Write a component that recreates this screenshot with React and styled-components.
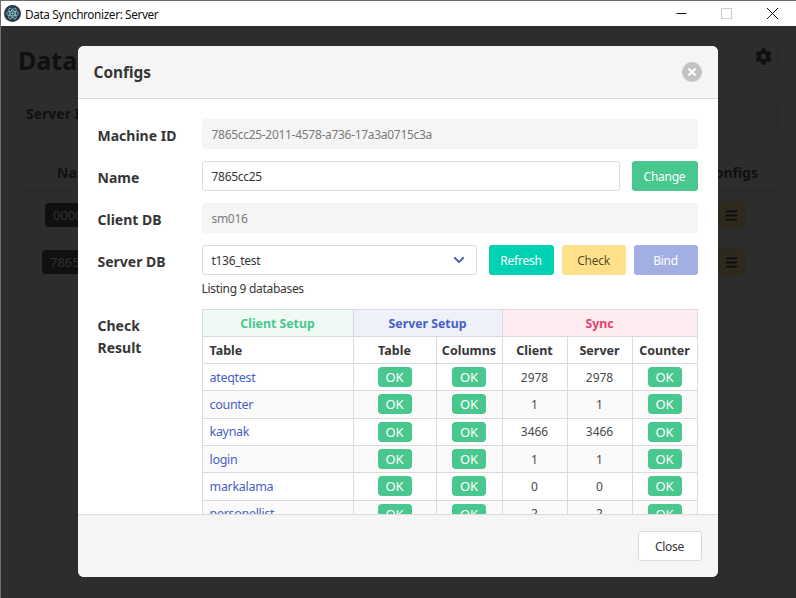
import React from "react";
import styled, { createGlobalStyle } from "styled-components";
import { FaCog, FaBars, FaChevronDown } from "react-icons/fa";

const Global = createGlobalStyle`
  html, body { margin: 0; padding: 0; height: 100%; overflow: hidden; }
  * { box-sizing: border-box; }
  body { font-family: "Noto Sans", "Open Sans", sans-serif; font-size: 13px; color: #4a4a4a; background: #fff; }
`;

const Win = styled.div`
  width: 796px; height: 598px; display: flex; flex-direction: column;
  border-top: 1px solid #6e6e6e; border-left: 1px solid #6e6e6e;
`;
const TitleBar = styled.header`
  height: 25px; flex: none; display: flex; align-items: center; background: #fff; padding: 0 1px 0 3px;
`;
const AppIcon = styled.svg`width: 17px; height: 17px; flex: none; margin-right: 4px;`;
const AppTitle = styled.span`font-size: 11.8px; color: #111; flex: 1; letter-spacing: -0.38px;`;
const WinCtl = styled.div`
  width: 45.5px; height: 25px; display: flex; align-items: center; justify-content: center;
`;
const Page = styled.main`flex: 1; position: relative; overflow: hidden; background: #fff; padding: 16px 17px;`;
const TopRow = styled.div`display: flex; justify-content: space-between; align-items: flex-start; height: 38px;`;
const Heading = styled.h1`margin: 0; font-size: 25px; line-height: 36px; font-weight: 700; color: #363636; white-space: nowrap;`;
const GearBtn = styled.button`
  width: 29px; height: 29px; border: 1px solid #dbdbdb; background: #fff; border-radius: 3px; padding: 0;
  display: flex; align-items: center; justify-content: center; color: #363636; font-size: 17px; margin-right: 1px;
`;
const Tabs = styled.div`
  margin-top: 17px; height: 33px; width: 760px; border: 1px solid #dbdbdb; border-radius: 3px; padding: 0 7px;
  display: flex; align-items: center; font-weight: 700; font-size: 14px; color: #363636;
`;
const BgTable = styled.div`margin-top: 24px; width: 760px;`;
const BgHead = styled.div`
  display: flex; justify-content: space-between; height: 38px; align-items: center; padding: 0 20px 0 39px;
  border-bottom: 1px solid #dbdbdb; font-weight: 700; color: #363636; font-size: 14px;
`;
const BgRow = styled.div`
  display: flex; justify-content: space-between; height: 47px; align-items: center; padding: 0 33px 0 15px;
  border-bottom: 1px solid #ededed;
`;
const NameCol = styled.div`width: 100px; display: flex; justify-content: center;`;
const Pill = styled.span`
  background: #363636; color: #fff; border-radius: 4px; width: ${p => p.$w}px; padding-left: 8px; height: 24px; display: flex; align-items: center; flex: none;
`;
const BarsBtn = styled.button`
  width: 28px; height: 28px; border: 0; border-radius: 3px; background: #ffe08a; color: #222; padding: 0;
  display: flex; align-items: center; justify-content: center; font-size: 13px;
`;

const Overlay = styled.div`
  position: absolute; inset: 0; background: rgba(10, 10, 10, 0.86);
  display: flex; justify-content: center; align-items: flex-start; padding: 20px 0 0 0;
`;
const Modal = styled.section`
  width: 640px; height: 531px; margin-right: 2px; border-radius: 6px; overflow: hidden; display: flex; flex-direction: column; background: #fff;
`;
const ModalHead = styled.div`
  height: 53px; flex: none; background: #f5f5f5; border-bottom: 1px solid #dbdbdb; padding: 0 16px;
  display: flex; align-items: center; justify-content: space-between;
`;
const ModalTitle = styled.h2`margin: 0; font-size: 15.4px; font-weight: 700; color: #363636;`;
const Delete = styled.button`
  width: 20px; height: 20px; border-radius: 50%; border: 0; padding: 0; background: #c2c2c2; position: relative;
  &::before, &::after {
    content: ""; position: absolute; left: 5px; top: 9px; width: 10px; height: 2px; background: #fff;
  }
  &::before { transform: rotate(45deg); }
  &::after { transform: rotate(-45deg); }
`;
const ModalBody = styled.div`flex: 1; overflow: hidden; padding: 20px 20px 0;`;
const Row = styled.div`display: flex; align-items: flex-start; margin-bottom: 12px;`;
const Label = styled.label`
  width: 104px; flex: none; font-size: 14px; font-weight: 700; color: #363636; line-height: 22px; padding-top: 6px;
`;
const Controls = styled.div`flex: 1; display: flex; gap: 8px; min-width: 0;`;
const Field = styled.div`
  flex: 1; height: 30px; border-radius: 3px; padding: 0 9px; display: flex; align-items: center; font-size: 12px; min-width: 0;
  letter-spacing: -0.3px;
  margin-right: ${p => p.$gap || 0}px;
  background: ${p => (p.$disabled ? "#f5f5f5" : "#fff")};
  color: ${p => (p.$disabled ? "#7a7a7a" : "#363636")};
  border: 1px solid ${p => (p.$disabled ? "#f5f5f5" : "#dbdbdb")};
  justify-content: space-between;
`;
const SelectArrow = styled(FaChevronDown)`color: #485fc7; font-size: 12px; margin-right: 2px;`;
const Btn = styled.button`
  height: 30px; width: ${p => p.$w}px; flex: none; border: 0; border-radius: 3px; font: inherit; font-size: 12px; padding: 0;
  letter-spacing: -0.25px;
  background: ${p => p.$bg}; color: ${p => p.$fg || "#fff"};
`;
const Help = styled.p`margin: -8px 0 0 104px; height: 20px; line-height: 20px; font-size: 12px; letter-spacing: -0.3px; color: #363636;`;
const CheckRow = styled.div`display: flex; align-items: flex-start; margin-top: 10px;`;
const CheckLabel = styled(Label)`padding-top: 6px;`;
const Table = styled.table`
  width: 496px; flex: none; border-collapse: collapse; table-layout: fixed; font-size: 12px; color: #4a4a4a;
  td, th { border: 1px solid #dbdbdb; padding: 0; text-align: center; vertical-align: middle; }
`;
const Col = styled.col`width: ${p => p.$w}px;`;
const GroupCell = styled.th`
  height: 27px; font-size: 12.3px; font-weight: 700; background: ${p => p.$bg}; color: ${p => p.$fg};
`;
const ColHead = styled.th`
  height: 27px; font-size: 12.5px; font-weight: 700; color: #363636; text-align: ${p => p.$left ? "left" : "center"} !important;
  padding-left: ${p => p.$left ? "7px" : "0"} !important;
`;
const DataRow = styled.tr`height: 27.33px; background: ${p => (p.$odd ? "#fafafa" : "#fff")};`;
const NameCell = styled.td`text-align: left !important; padding-left: 7px !important; color: #485fc7; font-size: 12.5px; letter-spacing: -0.3px;`;
const Ok = styled.span`
  display: inline-flex; align-items: center; justify-content: center; width: 34px; height: 20px; border-radius: 4px;
  background: #48c78e; color: #fff; font-size: 13px; vertical-align: middle;
`;
const ModalFoot = styled.div`
  height: 63px; flex: none; background: #f5f5f5; border-top: 1px solid #dbdbdb; padding: 0 16px;
  display: flex; align-items: center; justify-content: flex-end;
`;
const CloseBtn = styled.button`
  width: 64px; height: 30px; background: #fff; border: 1px solid #dbdbdb; border-radius: 3px; font: inherit; font-size: 12px; letter-spacing: -0.25px; color: #363636; padding: 0;
`;

const rows = [
  ["ateqtest", 2978, 2978], ["counter", 1, 1], ["kaynak", 3466, 3466], ["login", 1, 1],
  ["markalama", 0, 0], ["personellist", 2, 2], ["sayim", 12, 12], ["stok", 40, 40], ["urun", 7, 7],
];

export default function App() {
  return (
    <Win>
      <Global />
      <TitleBar>
        <AppIcon viewBox="0 0 17 17">
          <circle cx="8.5" cy="8.5" r="8.5" fill="#2b3a47" />
          <g fill="none" stroke="#9fdcee" strokeWidth="0.7">
            <ellipse cx="8.5" cy="8.5" rx="6" ry="2.4" />
            <ellipse cx="8.5" cy="8.5" rx="6" ry="2.4" transform="rotate(60 8.5 8.5)" />
            <ellipse cx="8.5" cy="8.5" rx="6" ry="2.4" transform="rotate(120 8.5 8.5)" />
          </g>
          <circle cx="8.5" cy="8.5" r="1.1" fill="#9fdcee" />
        </AppIcon>
        <AppTitle>Data Synchronizer: Server</AppTitle>
        <WinCtl><svg width="11" height="11"><path d="M0.5 5.5h10" stroke="#111" /></svg></WinCtl>
        <WinCtl><svg width="11" height="11"><rect x="0.5" y="0.5" width="10" height="10" fill="none" stroke="#ccc" /></svg></WinCtl>
        <WinCtl><svg width="11" height="11"><path d="M0 0l11 11M11 0L0 11" stroke="#111" /></svg></WinCtl>
      </TitleBar>
      <Page>
        <TopRow>
          <Heading>Data Synchronizer</Heading>
          <GearBtn><FaCog /></GearBtn>
        </TopRow>
        <Tabs>Server Info</Tabs>
        <BgTable>
          <BgHead><span>Name</span><span>Configs</span></BgHead>
          <BgRow><NameCol><Pill $w={76}>00000000</Pill></NameCol><BarsBtn><FaBars /></BarsBtn></BgRow>
          <BgRow><NameCol><Pill $w={82}>7865cc25</Pill></NameCol><BarsBtn><FaBars /></BarsBtn></BgRow>
        </BgTable>
        <Overlay>
          <Modal>
            <ModalHead>
              <ModalTitle>Configs</ModalTitle>
              <Delete aria-label="close" />
            </ModalHead>
            <ModalBody>
              <Row>
                <Label>Machine ID</Label>
                <Controls><Field $disabled>7865cc25-2011-4578-a736-17a3a0715c3a</Field></Controls>
              </Row>
              <Row>
                <Label>Name</Label>
                <Controls>
                  <Field $gap={4}>7865cc25</Field>
                  <Btn $w={66} $bg="#48c78e">Change</Btn>
                </Controls>
              </Row>
              <Row>
                <Label>Client DB</Label>
                <Controls><Field $disabled>sm016</Field></Controls>
              </Row>
              <Row>
                <Label>Server DB</Label>
                <Controls>
                  <Field $gap={4}>t136_test<SelectArrow /></Field>
                  <Btn $w={65} $bg="#00d1b2">Refresh</Btn>
                  <Btn $w={64} $bg="#ffe08a" $fg="rgba(0,0,0,.7)">Check</Btn>
                  <Btn $w={64} $bg="#a3aee3">Bind</Btn>
                </Controls>
              </Row>
              <Help>Listing 9 databases</Help>
              <CheckRow>
                <CheckLabel>Check<br />Result</CheckLabel>
                <Table>
                  <colgroup>
                    <Col $w={151} /><Col $w={83} /><Col $w={66} />
                    <Col $w={65} /><Col $w={65} /><Col $w={65} />
                  </colgroup>
                  <thead>
                    <tr>
                      <GroupCell $bg="#effaf5" $fg="#48c78e">Client Setup</GroupCell>
                      <GroupCell colSpan={2} $bg="#eff1fa" $fg="#485fc7">Server Setup</GroupCell>
                      <GroupCell colSpan={3} $bg="#feecf0" $fg="#e8406a">Sync</GroupCell>
                    </tr>
                    <tr>
                      <ColHead $left>Table</ColHead><ColHead>Table</ColHead><ColHead>Columns</ColHead>
                      <ColHead>Client</ColHead><ColHead>Server</ColHead><ColHead>Counter</ColHead>
                    </tr>
                  </thead>
                  <tbody>
                    {rows.map(([n, c, s], i) => (
                      <DataRow key={n} $odd={i % 2 === 1}>
                        <NameCell>{n}</NameCell>
                        <td><Ok>OK</Ok></td>
                        <td><Ok>OK</Ok></td>
                        <td>{c}</td>
                        <td>{s}</td>
                        <td><Ok>OK</Ok></td>
                      </DataRow>
                    ))}
                  </tbody>
                </Table>
              </CheckRow>
            </ModalBody>
            <ModalFoot><CloseBtn>Close</CloseBtn></ModalFoot>
          </Modal>
        </Overlay>
      </Page>
    </Win>
  );
}
